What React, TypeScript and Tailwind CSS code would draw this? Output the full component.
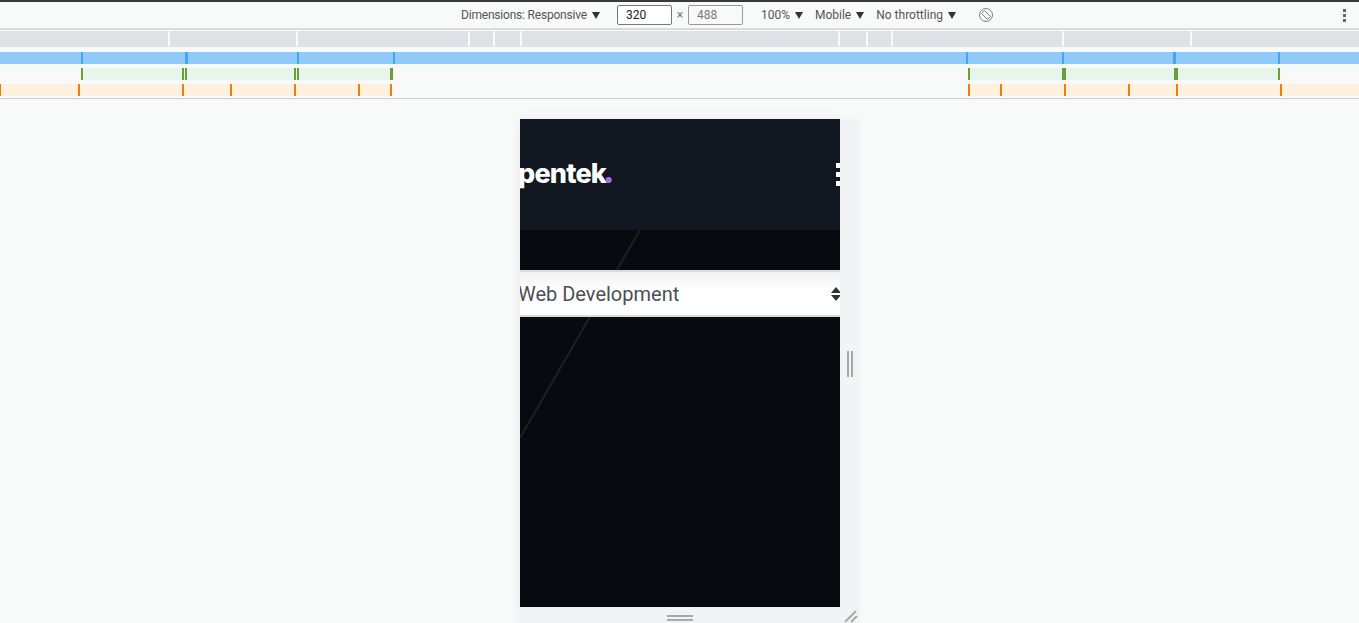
import React from "react";

const font = { fontFamily: 'Roboto, "Liberation Sans", sans-serif' };

// ruler marks, [x, width]
const grayTicks = [168, 296, 468, 493, 520, 838, 866, 891, 1062, 1190];
const blueTicks = [
  [81, 2],
  [185, 3],
  [297, 2],
  [393, 2],
  [966, 2],
  [1062, 2],
  [1173, 3],
  [1278, 2],
];
const greenTicks = [
  [81, 2],
  [182, 2],
  [185, 2],
  [294, 2],
  [297, 2],
  [390, 3],
  [968, 2],
  [1062, 4],
  [1174, 4],
  [1278, 2],
];
const orangeTicks = [
  [0, 1],
  [78, 2],
  [182, 2],
  [230, 2],
  [294, 2],
  [358, 2],
  [390, 2],
  [968, 2],
  [1000, 2],
  [1064, 2],
  [1128, 2],
  [1176, 2],
  [1280, 2],
];

const Tick = ({ x, w, color }: { x: number; w: number; color: string }) => (
  <div className={`absolute top-0 h-full ${color}`} style={{ left: x, width: w }} />
);

const Caret = () => (
  <svg className="ml-[5px]" width="8" height="7" viewBox="0 0 8 7" fill="#333">
    <path d="M0 0 L8 0 L4 7 Z" />
  </svg>
);

const Toolbar = () => (
  <div className="h-[28px] flex items-center text-[12px] text-[#555] border-b-2 border-[#dadcdc] pl-[461px]">
    <span className="tracking-[-0.2px]">Dimensions: Responsive</span>
    <Caret />
    <input
      readOnly
      value="320"
      className="ml-[17px] w-[55px] h-[20px] border border-[#777] rounded-[2px] px-2 text-[12px] text-[#222] bg-white"
    />
    <span className="w-[16px] text-center text-[#777] text-[12px]">×</span>
    <input
      readOnly
      value="488"
      className="w-[55px] h-[20px] border border-[#999] rounded-[2px] px-2 text-[12px] text-[#777] bg-[#f8faf9]"
    />
    <span className="ml-[18px]">100%</span>
    <Caret />
    <span className="ml-[12px]">Mobile</span>
    <Caret />
    <span className="ml-[12px]">No throttling</span>
    <Caret />
    <svg className="ml-[22px]" width="16" height="16" viewBox="0 0 16 16" fill="none" stroke="#808080" strokeWidth="1">
      <circle cx="8" cy="8" r="6.5" />
      <path d="M3.5 6.5 L6.5 3.5 L12.5 9.5 L9.5 12.5 Z" />
    </svg>
    <div className="ml-auto mr-[13px] flex flex-col gap-[2px]">
      <div className="w-[3px] h-[3px] bg-[#666]" />
      <div className="w-[3px] h-[3px] bg-[#666]" />
      <div className="w-[3px] h-[3px] bg-[#666]" />
    </div>
  </div>
);

const Rulers = () => (
  <div className="h-[69px] border-b border-[#cbcdcd] pt-[1px]">
    <div className="h-[16px] bg-[#dee1e6]">
      <div className="relative h-[15px]">
        {grayTicks.map((x) => (
          <Tick key={x} x={x} w={2} color="bg-[#f8faf9]" />
        ))}
      </div>
    </div>
    <div className="relative h-[12px] mt-[5px] bg-[#90caf9]">
      {blueTicks.map(([x, w]) => (
        <Tick key={x} x={x} w={w} color="bg-[#42a5f5]" />
      ))}
    </div>
    <div className="relative h-[12px] mt-[4px] flex">
      <div className="ml-[83px] w-[307px] bg-[#e9f4ea]" />
      <div className="ml-[580px] w-[308px] bg-[#e9f4ea]" />
      {greenTicks.map(([x, w]) => (
        <Tick key={x} x={x} w={w} color="bg-[#689f38]" />
      ))}
    </div>
    <div className="relative h-[12px] mt-[4px] flex">
      <div className="w-[392px] bg-[#fff1df]" />
      <div className="ml-[576px] flex-1 bg-[#fff1df]" />
      {orangeTicks.map(([x, w]) => (
        <Tick key={x} x={x} w={w} color="bg-[#f57c00]" />
      ))}
    </div>
  </div>
);

const Phone = () => (
  <div className="relative w-[320px] h-[488px] bg-[#070a0f] overflow-hidden">
    <svg className="absolute left-0 top-0" width="320" height="488" fill="none">
      <path d="M120 111 L0 319" stroke="#1e2123" strokeWidth="2" />
    </svg>
    <header className="relative h-[111px] bg-[#111821] flex items-center justify-between">
      <span
        className="text-[27px] font-extrabold text-white tracking-[-0.8px] leading-none -ml-[2px] pb-[5px]"
        style={{ fontFamily: "Inter, sans-serif" }}
      >
        pentek<span className="text-[30px] -ml-[3px] leading-none text-[#a06ef8] font-black">.</span>
      </span>
      <div className="flex flex-col gap-[4px] -mr-[2px]">
        <div className="w-[6px] h-[5px] bg-white" />
        <div className="w-[6px] h-[5px] bg-white" />
        <div className="w-[6px] h-[5px] bg-white" />
      </div>
    </header>
    <div className="relative mt-[40px] h-[47px] bg-gradient-to-b from-[#f0f0f0] to-white to-40% border-y-2 border-[#d9dcdf] flex items-center justify-between">
      <span className="text-[20px] text-[#495057] -ml-[2px]">Web Development</span>
      <svg className="-mr-[1px]" width="10" height="14" viewBox="0 0 10 14" fill="#333">
        <path d="M5 0 L10 6 L0 6 Z M5 14 L10 8 L0 8 Z" />
      </svg>
    </div>
  </div>
);

export default function App() {
  return (
    <div className="w-[1359px] h-[623px] overflow-hidden bg-[#f8faf9] border-t-2 border-[#3a3a3a]" style={font}>
      <Toolbar />
      <Rulers />
      <div className="pt-[20px] pl-[520px] flex">
        <div className="shadow-[0_0_12px_rgba(0,0,0,0.06)]">
          <Phone />
          <div className="h-[16px] w-[320px] bg-[#f1f3f4] flex justify-center pt-[8px]">
            <div className="w-[26px] h-[6px] border-y-2 border-[#a9a9a9]" />
          </div>
        </div>
        <div className="w-[20px] h-[504px] bg-[#f1f3f4] relative">
          <div className="absolute left-[7px] top-[232px] w-[6px] h-[26px] border-x-2 border-[#a9a9a9]" />
          <svg className="absolute left-[4px] bottom-0" width="14" height="13" fill="none" stroke="#a9a9a9" strokeWidth="2">
            <path d="M1 12 L12 1 M7 12 L13 6" />
          </svg>
        </div>
      </div>
    </div>
  );
}
